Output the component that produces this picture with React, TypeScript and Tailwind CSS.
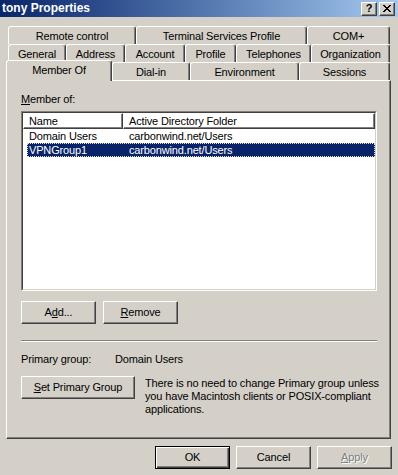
import React from "react";

const raised =
  "border border-t-white border-l-white border-r-[#404040] border-b-[#404040] shadow-[inset_-1px_-1px_0_#808080]";

type Tab = { label: string; w: string };

const row1: Tab[] = [
  { label: "Remote control", w: "w-[128px]" },
  { label: "Terminal Services Profile", w: "w-[171px]" },
  { label: "COM+", w: "w-[83px]" },
];

const row2: Tab[] = [
  { label: "General", w: "w-[58px]" },
  { label: "Address", w: "w-[59px]" },
  { label: "Account", w: "w-[60px]" },
  { label: "Profile", w: "w-[51px]" },
  { label: "Telephones", w: "w-[75px]" },
  { label: "Organization", w: "w-[79px]" },
];

const row3: Tab[] = [
  { label: "Dial-in", w: "w-[78px]" },
  { label: "Environment", w: "w-[109px]" },
  { label: "Sessions", w: "w-[91px]" },
];

function TabItem({ label, w }: Tab) {
  return (
    <div
      className={`${w} h-[18px] flex items-center justify-center rounded-t-[3px] border-t border-l border-r border-t-white border-l-white border-r-[#404040] shadow-[inset_-1px_0_0_#808080] pt-[1px]`}
    >
      {label}
    </div>
  );
}

function Button({
  children,
  w = "w-[75px]",
  isDefault,
  disabled,
}: {
  children: React.ReactNode;
  w?: string;
  isDefault?: boolean;
  disabled?: boolean;
}) {
  const frame = isDefault
    ? "border border-black shadow-[inset_1px_1px_0_#fff,inset_-1px_-1px_0_#404040,inset_-2px_-2px_0_#808080]"
    : raised;
  return (
    <div
      className={`${w} h-[23px] flex items-center justify-center ${frame} ${
        disabled ? "text-[#808080] [text-shadow:1px_1px_0_#fff]" : ""
      }`}
    >
      {children}
    </div>
  );
}

function Row({
  name,
  folder,
  selected,
}: {
  name: string;
  folder: string;
  selected?: boolean;
}) {
  return (
    <div
      className={`ml-[4px] w-[348px] h-[14px] flex items-center ${
        selected ? "bg-[#0a246a] text-white outline outline-1 outline-dotted outline-[#e8e4b0] -outline-offset-1" : ""
      }`}
    >
      <div className="w-[96px] pl-[2px]">{name}</div>
      <div className="pl-[6px]">{folder}</div>
    </div>
  );
}

export default function App() {
  return (
    <div className="w-[398px] h-[475px] overflow-hidden bg-[#d4d0c8] text-black text-[11px] leading-[13px] tracking-[-0.15px] font-['Liberation_Sans',Arial,sans-serif]">
      {/* title bar */}
      <div className="h-[17px] flex items-center bg-gradient-to-r from-[#0a246a] to-[#a6caf0]">
        <div className="flex-1 pl-[2px] text-white font-bold text-[12px] tracking-normal">
          tony Properties
        </div>
        <div className="flex gap-[2px] pr-[3px]">
          <div className={`w-[16px] h-[14px] bg-[#d4d0c8] flex items-center justify-center font-bold text-[11px] ${raised}`}>
            ?
          </div>
          <div className={`w-[16px] h-[14px] bg-[#d4d0c8] flex items-center justify-center ${raised}`}>
            <svg width="8" height="7" viewBox="0 0 8 7" shapeRendering="crispEdges">
              <path d="M0 0h2v1h-2zM6 0h2v1h-2zM1 1h2v1h-2zM5 1h2v1h-2zM2 2h4v1h-4zM3 3h2v1h-2zM2 4h4v1h-4zM1 5h2v1h-2zM5 5h2v1h-2zM0 6h2v1h-2zM6 6h2v1h-2z" fill="#000" />
            </svg>
          </div>
        </div>
      </div>

      {/* tabs */}
      <div className="mt-[9px]">
        <div className="ml-[8px] flex">
          {row1.map((t) => (
            <TabItem key={t.label} {...t} />
          ))}
        </div>
        <div className="ml-[8px] flex">
          {row2.map((t) => (
            <TabItem key={t.label} {...t} />
          ))}
        </div>
        <div className="ml-[6px] flex h-[18px]">
          <div className="relative z-10 -mt-[2px] w-[106px] h-[21px] bg-[#d4d0c8] flex justify-center pt-[3px] rounded-t-[3px] border-t border-l border-r border-t-white border-l-white border-r-[#404040] shadow-[inset_-1px_0_0_#808080]">
            Member Of
          </div>
          {row3.map((t) => (
            <TabItem key={t.label} {...t} />
          ))}
        </div>
      </div>

      {/* panel */}
      <div className={`ml-[6px] w-[385px] h-[359px] pl-[14px] pt-[12px] ${raised}`}>
        <div>
          <span className="underline">M</span>ember of:
        </div>

        <div className="mt-[5px] w-[356px] h-[180px] border border-t-[#808080] border-l-[#808080] border-r-white border-b-white">
          <div className="h-full border border-t-[#404040] border-l-[#404040] border-r-[#d4d0c8] border-b-[#d4d0c8] bg-white">
            <div className="flex h-[16px]">
              <div className={`w-[100px] flex items-center pl-[5px] ${raised}`}>Name</div>
              <div className={`w-[252px] flex items-center pl-[5px] ${raised}`}>
                Active Directory Folder
              </div>
            </div>
            <Row name="Domain Users" folder="carbonwind.net/Users" />
            <Row name="VPNGroup1" folder="carbonwind.net/Users" selected />
          </div>
        </div>

        <div className="mt-[10px] flex gap-[7px]">
          <Button>
            A<span className="underline">d</span>d...
          </Button>
          <Button>
            <span className="underline">R</span>emove
          </Button>
        </div>

        <div className="mt-[16px] w-[356px] h-[2px] border-t border-t-[#808080] border-b border-b-white" />

        <div className="mt-[11px] flex">
          <div className="w-[94px]">Primary group:</div>
          <div>Domain Users</div>
        </div>

        <div className="mt-[10px] flex">
          <Button w="w-[114px]">
            <span className="underline">S</span>et Primary Group
          </Button>
          <div className="ml-[10px] w-[234px] pt-[1px]">
            There is no need to change Primary group unless
            <br />
            you have Macintosh clients or POSIX-compliant
            <br />
            applications.
          </div>
        </div>
      </div>

      {/* dialog buttons */}
      <div className="mt-[7px] flex justify-end gap-[6px] pr-[6px]">
        <Button isDefault>OK</Button>
        <Button>Cancel</Button>
        <Button disabled>
          <span className="underline">A</span>pply
        </Button>
      </div>
    </div>
  );
}
